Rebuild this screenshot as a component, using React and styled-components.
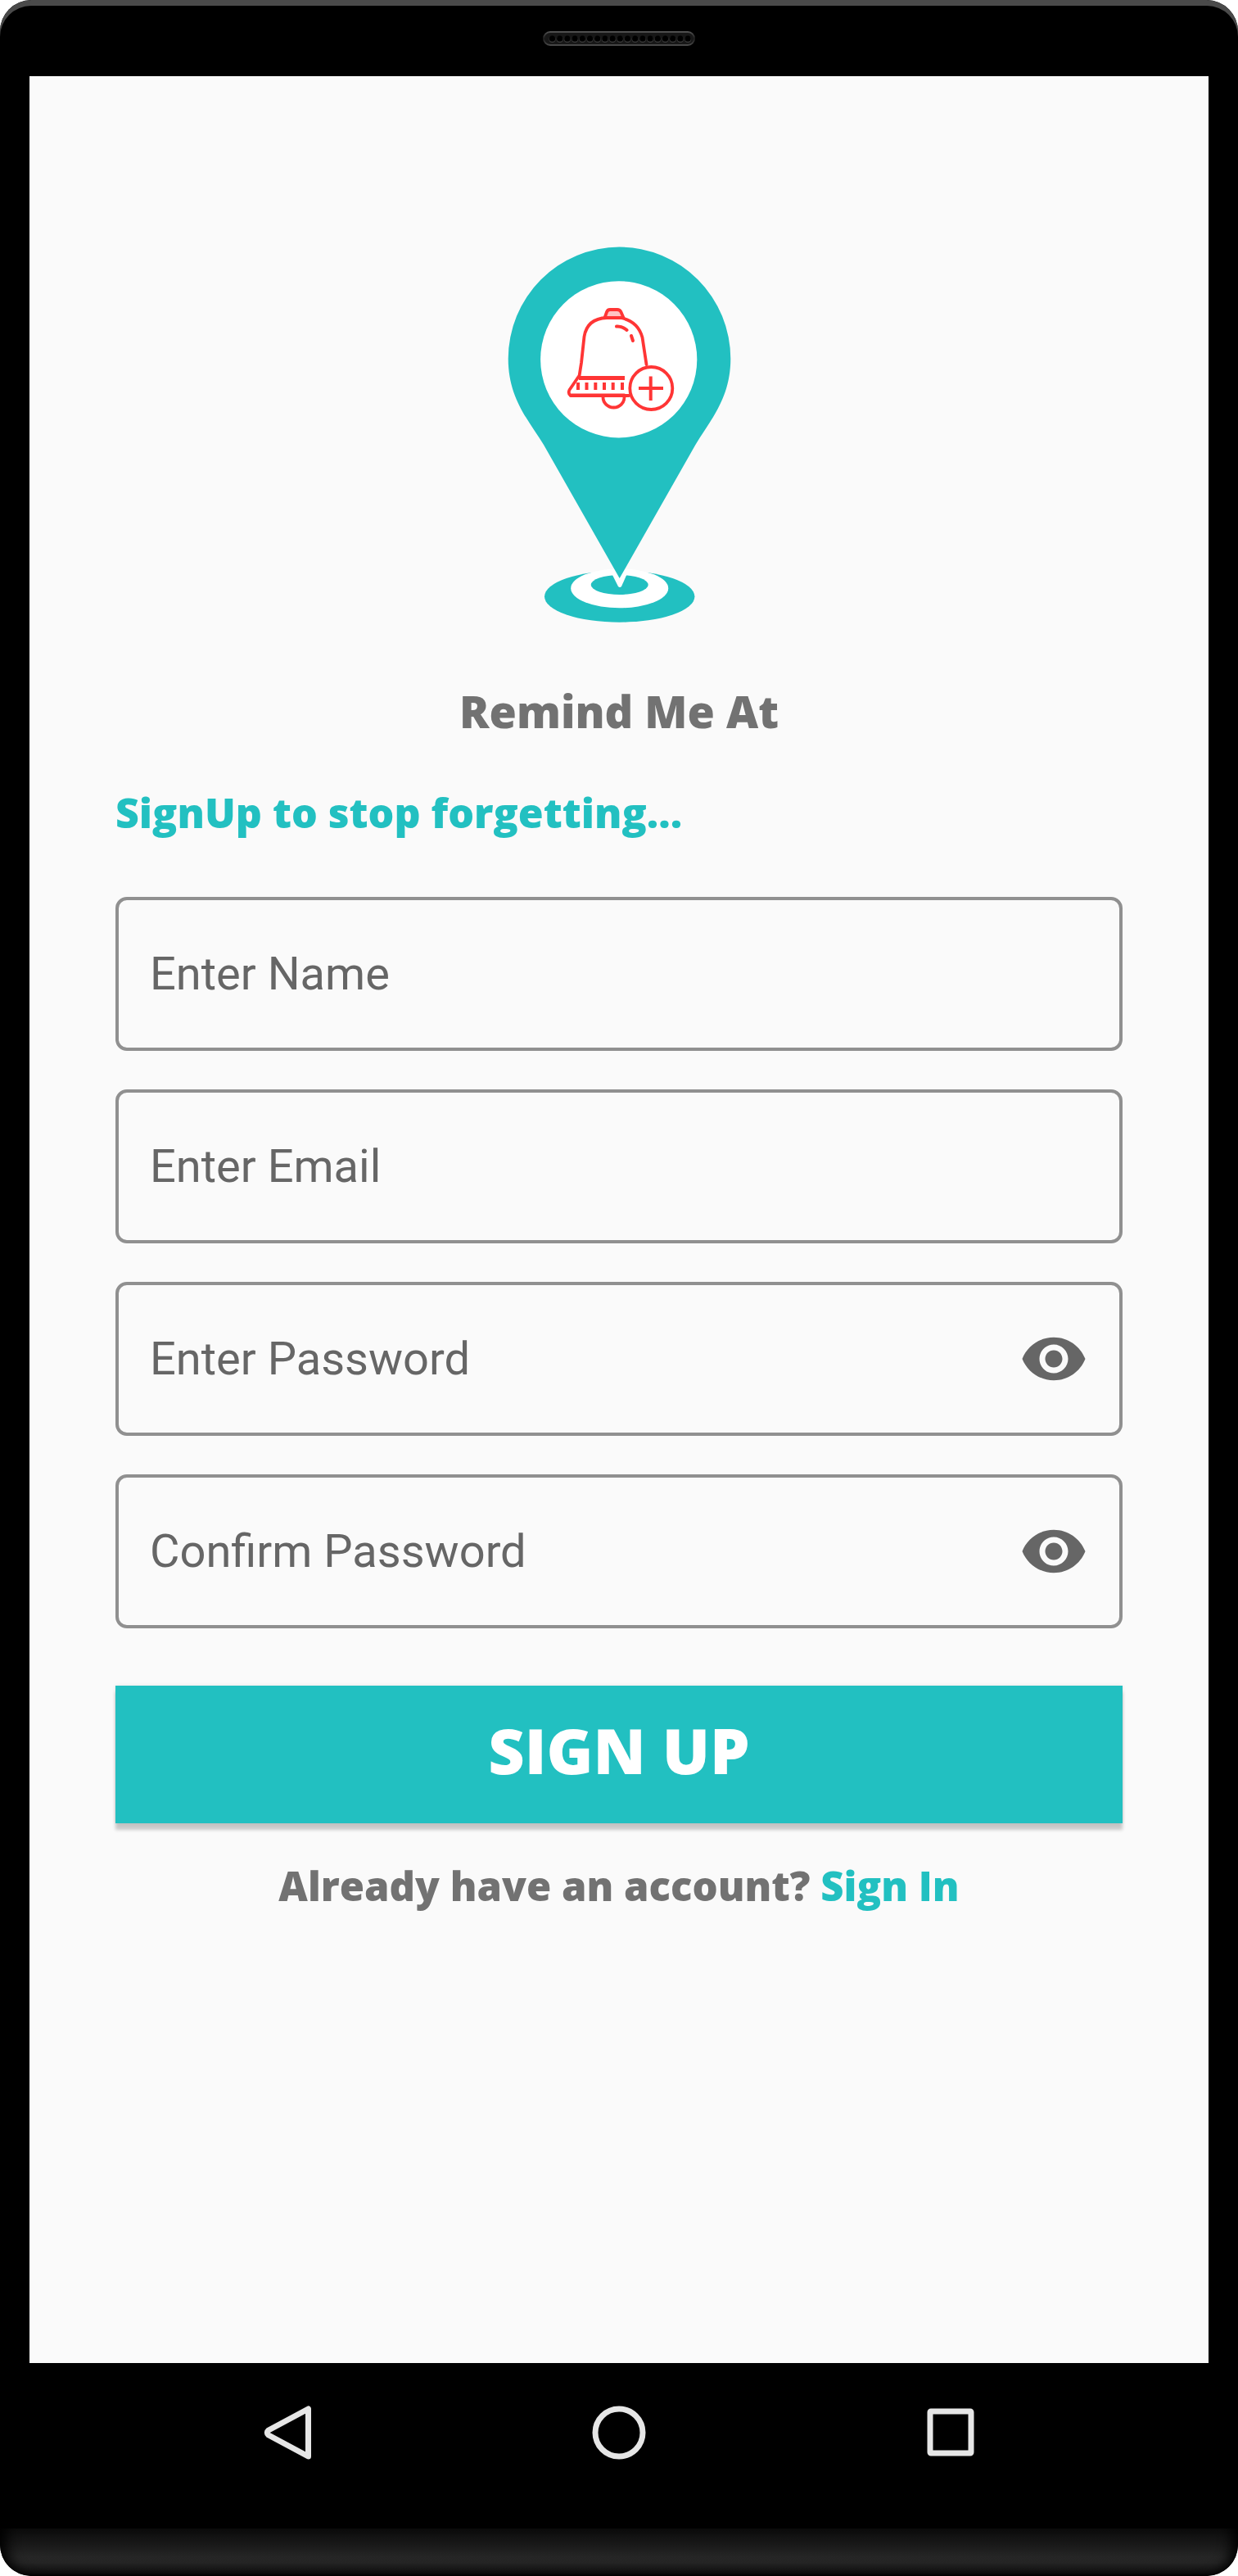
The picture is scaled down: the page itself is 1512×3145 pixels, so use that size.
import React, { useState } from "react";
import styled, { createGlobalStyle } from "styled-components";

const teal = "#22c0c1";
const grey = "#727272";
const display = `"Open Sans", sans-serif`;

const GlobalStyle = createGlobalStyle`
  *, *::before, *::after { box-sizing: border-box; }
  body { margin: 0; background: #fff; font-family: Roboto, sans-serif; }
  button { border: 0; padding: 0; background: none; cursor: pointer; }
`;

const Phone = styled.div`
  display: flex;
  flex-direction: column;
  min-height: 100vh;
  border-radius: 38px;
  overflow: hidden;
  background: #000;
`;

const TopBezel = styled.header`
  display: flex;
  justify-content: center;
  align-items: center;
  height: 93px;
  border-radius: 38px 38px 0 0;
  box-shadow: inset 0 7px 0 #4a4a4a;
`;

const Screen = styled.main`
  flex: 1;
  display: flex;
  flex-direction: column;
  align-items: center;
  margin: 0 36px;
  padding: 187px 105px 0;
  background: #fafafa;
`;

const Title = styled.h1`
  margin: 62px 0 0;
  font: 800 54px/72px ${display};
  color: ${grey};
`;

const Tagline = styled.h2`
  align-self: stretch;
  margin: 56px 0 0;
  font: 800 50px/64px ${display};
  color: ${teal};
`;

const Form = styled.form`
  align-self: stretch;
  display: flex;
  flex-direction: column;
  gap: 47px;
  margin-top: 71px;
`;

const Field = styled.div`
  display: flex;
  align-items: center;
  height: 188px;
  padding: 0 38px;
  border: 4px solid #909090;
  border-radius: 14px;
`;

const Input = styled.input`
  flex: 1;
  min-width: 0;
  height: 100%;
  padding: 0;
  border: 0;
  outline: 0;
  background: transparent;
  color: #333;
  font: 400 56px/64px Roboto, sans-serif;
  &::placeholder { color: #666; opacity: 1; }
`;

const EyeButton = styled.button`
  display: flex;
  color: #666;
`;

const Submit = styled.button`
  height: 168px;
  margin-top: 23px;
  padding-bottom: 10px;
  background: ${teal};
  color: #fff;
  font: 800 77px/96px ${display};
  box-shadow: 0 8px 4px rgba(0, 0, 0, 0.2), 0 0 4px rgba(0, 0, 0, 0.1);
`;

const Footnote = styled.p`
  margin: 44px 0 0;
  font: 800 49px/64px ${display};
  color: ${grey};
`;

const Link = styled.a`
  color: ${teal};
  text-decoration: none;
`;

const NavBar = styled.nav`
  display: grid;
  grid-template-columns: repeat(3, 1fr);
  justify-items: center;
  align-items: center;
  height: 202px;
  margin: 0 36px;
  padding: 0 112px 32px;
`;

const NavButton = styled.button`
  display: flex;
`;

const Chin = styled.footer`
  height: 58px;
  border-radius: 0 0 38px 38px;
  background: linear-gradient(#0c0c0c, #171717 30%, #262626 60%, #242424 72%, #0e0e0e 94%, #000);
  box-shadow: inset 20px 0 16px -12px #000, inset -20px 0 16px -12px #000;
`;

function Speaker() {
  return (
    <svg width="186" height="18" viewBox="0 0 186 18" aria-hidden="true">
      <defs>
        <linearGradient id="rim" x1="0" y1="0" x2="0" y2="1">
          <stop offset="0" stopColor="#505050" />
          <stop offset="0.5" stopColor="#1c1c1c" />
          <stop offset="1" stopColor="#484848" />
        </linearGradient>
      </defs>
      <rect x="1" y="1" width="184" height="16" rx="8" fill="#171717" stroke="url(#rim)" strokeWidth="2" />
      {Array.from({ length: 19 }, (_, i) => (
        <g key={i}>
          <circle cx={11.5 + i * 9.2} cy="10" r="4" fill="#3c3c3c" />
          <circle cx={11.5 + i * 9.2} cy="9.2" r="3.6" fill="#000" />
        </g>
      ))}
    </svg>
  );
}

function Logo() {
  return (
    <svg width="310" height="490" viewBox="1 0 310 490" role="img" aria-label="Map pin with a bell">
      <ellipse cx="156.7" cy="448.3" rx="91.7" ry="31.4" fill={teal} />
      <path d="M124 412H189V422H124Z" fill="#fafafa" />
      <ellipse cx="156.7" cy="438.3" rx="59.5" ry="24" fill="#fff" />
      <ellipse cx="156.7" cy="434" rx="35" ry="12" fill={teal} />
      <path d="M146 418L155 436Q157 438 159 436L167 418Z" fill="#fff" />
      <path
        d="M64 263C48 236 20.7 208 20.7 158A135.8 136.5 0 0 1 292.3 158C292.3 208 265 236 249.4 263L156.7 426Z"
        fill={teal}
      />
      <circle cx="155.7" cy="158.8" r="95.6" fill="#fff" />
      <g fill="none" stroke="#ff3535" strokeWidth="3.8" strokeLinecap="round" strokeLinejoin="round">
        <path d="M138.5 108L141 101Q142 98 145 98H154Q157 98 158.5 101L161.5 108Z" fill="#ffc4c4" />
        <path d="M107.5 179L110 163L113.5 131Q117 109 141 108H158Q179 112 184.5 132L189.5 165" />
        <path d="M162.5 202.5H96.5Q93.5 200 95.5 196L106.5 180" />
        <path d="M97 203H168" strokeWidth="4" />
        <path d="M107 181.5H163" strokeWidth="5" strokeLinecap="butt" />
        <path d="M136.5 205A13 12.5 0 0 0 162.5 205" />
        <path d="M153 118.5Q160 118 165.5 123" strokeWidth="4" />
        <path d="M171 130L173 136" strokeWidth="4" />
        <path
          d="M106 187V196M116.5 187V196M127.3 187V196M138 187V196M148.7 187V196M160 187V196"
          strokeWidth="4"
          strokeLinecap="butt"
        />
        <circle cx="195.3" cy="194" r="26" fill="#fff" />
        <path d="M180 194H210M194.7 179.5V209" strokeWidth="4" strokeLinecap="butt" />
      </g>
    </svg>
  );
}

function EyeIcon() {
  return (
    <svg width="84" height="84" viewBox="0 0 24 24" fill="currentColor" aria-hidden="true">
      <path d="M12 4.5C7 4.5 2.73 7.61 1 12c1.73 4.39 6 7.5 11 7.5s9.27-3.11 11-7.5c-1.73-4.39-6-7.5-11-7.5zM12 17c-2.76 0-5-2.24-5-5s2.24-5 5-5 5 2.24 5 5-2.24 5-5 5zm0-8c-1.66 0-3 1.34-3 3s1.34 3 3 3 3-1.34 3-3-1.34-3-3-3z" />
    </svg>
  );
}

function NavIcon({ children }) {
  return (
    <svg width="72" height="72" viewBox="0 0 72 72" fill="none" stroke="#e6e6e6" strokeWidth="7" strokeLinejoin="round" aria-hidden="true">
      {children}
    </svg>
  );
}

function TextField({ label, type = "text", name }) {
  const [value, setValue] = useState("");
  const [shown, setShown] = useState(false);
  const secret = type === "password";
  return (
    <Field>
      <Input
        name={name}
        type={secret && shown ? "text" : type}
        aria-label={label}
        placeholder={label}
        value={value}
        onChange={(e) => setValue(e.target.value)}
      />
      {secret && (
        <EyeButton type="button" aria-label={`Show: ${label}`} onClick={() => setShown(!shown)}>
          <EyeIcon />
        </EyeButton>
      )}
    </Field>
  );
}

export default function App() {
  return (
    <>
      <GlobalStyle />
      <Phone>
        <TopBezel>
          <Speaker />
        </TopBezel>
        <Screen>
          <Logo />
          <Title>Remind Me At</Title>
          <Tagline>SignUp to stop forgetting...</Tagline>
          <Form onSubmit={(e) => e.preventDefault()}>
            <TextField name="name" label="Enter Name" />
            <TextField name="email" type="email" label="Enter Email" />
            <TextField name="password" type="password" label="Enter Password" />
            <TextField name="confirm" type="password" label="Confirm Password" />
            <Submit type="submit">SIGN UP</Submit>
          </Form>
          <Footnote>
            Already have an account? <Link href="#signin">Sign In</Link>
          </Footnote>
        </Screen>
        <NavBar>
          <NavButton aria-label="Back">
            <NavIcon>
              <path d="M61.5 7V65L13 39Q9.5 36 13 33Z" />
            </NavIcon>
          </NavButton>
          <NavButton aria-label="Home">
            <NavIcon>
              <circle cx="36" cy="36" r="29" />
            </NavIcon>
          </NavButton>
          <NavButton aria-label="Recent apps">
            <NavIcon>
              <rect x="11" y="10" width="50" height="51" rx="1" />
            </NavIcon>
          </NavButton>
        </NavBar>
        <Chin />
      </Phone>
    </>
  );
}
